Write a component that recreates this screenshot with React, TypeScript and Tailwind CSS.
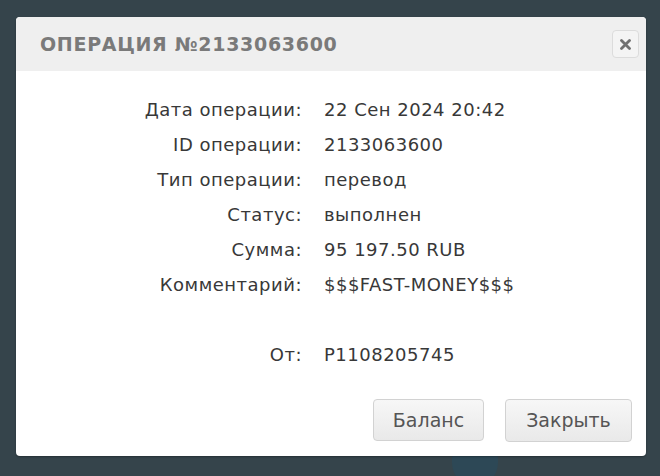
import React from "react";

const rows: [string, string][] = [
  ["Дата операции:", "22 Сен 2024 20:42"],
  ["ID операции:", "2133063600"],
  ["Тип операции:", "перевод"],
  ["Статус:", "выполнен"],
  ["Сумма:", "95 197.50 RUB"],
  ["Комментарий:", "$$$FAST-MONEY$$$"],
  ["", ""],
  ["От:", "P1108205745"],
];

export default function App() {
  return (
    <div className="relative w-[660px] h-[476px] overflow-hidden bg-[#35444b]" style={{ fontFamily: '"DejaVu Sans", "Noto Sans", sans-serif' }}>
      <div className="absolute left-[452px] top-[436px] w-[46px] h-[50px] rounded-full bg-[#2d4856]" />
      <div className="relative pt-[17px] pl-[16px]">
        <div className="w-[630px] h-[439px] bg-white rounded-[4px] flex flex-col overflow-hidden shadow-[0_1px_2px_rgba(0,0,0,0.3)]">
          <div className="h-[54px] bg-[#efefef] flex items-center justify-between pl-[24px] pr-[7px]">
            <div className="text-[19px] font-bold tracking-[0.7px] text-[#7a7a7a]">ОПЕРАЦИЯ №2133063600</div>
            <button className="w-[27px] h-[28px] rounded-[4px] border border-[#dcdcdc] bg-[#f4f4f4] flex items-center justify-center">
              <svg width="11" height="11" viewBox="0 0 11 11"><path d="M1.5 1.5 L9.5 9.5 M9.5 1.5 L1.5 9.5" stroke="#707070" strokeWidth="2.8" strokeLinecap="round" /></svg>
            </button>
          </div>
          <div className="pt-[21px] grid grid-cols-[286px_1fr] gap-x-[22px] text-[18px] tracking-[0.5px] text-[#383838]">
            {rows.map(([l, v], i) => (
              <React.Fragment key={i}>
                <div className="h-[35px] flex items-center justify-end">{l}</div>
                <div className="h-[35px] flex items-center">{v}</div>
              </React.Fragment>
            ))}
          </div>
          <div className="mt-auto flex justify-end gap-[21px] pr-[14px] pb-[14px]">
            <button className="w-[111px] h-[42px] rounded-[4px] border border-[#d2d2d2] bg-gradient-to-b from-[#f7f7f7] to-[#e9e9e9] text-[19px] text-[#555555]">Баланс</button>
            <button className="w-[127px] h-[43px] rounded-[4px] border border-[#d2d2d2] bg-gradient-to-b from-[#f7f7f7] to-[#e9e9e9] text-[19px] text-[#555555]">Закрыть</button>
          </div>
        </div>
      </div>
    </div>
  );
}
